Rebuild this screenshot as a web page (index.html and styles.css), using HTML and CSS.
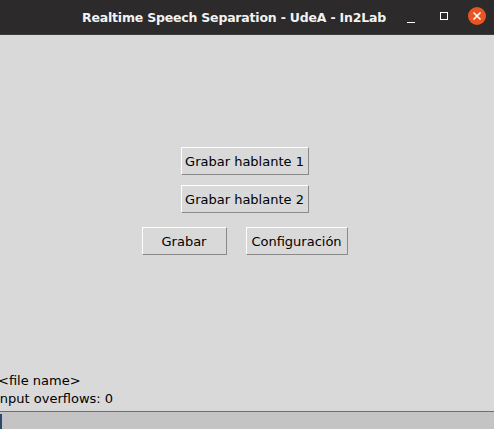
FILE: index.html
```html
<!DOCTYPE html>
<html>
<head>
<meta charset="utf-8">
<link rel="stylesheet" href="styles.css">
</head>
<body>
<div class="window">
  <header class="titlebar">
    <span class="title">Realtime Speech Separation - UdeA - In2Lab</span>
    <div class="controls">
      <span class="ctl min"><svg width="10" height="10" viewBox="0 0 10 10"><path d="M1 9.5H9" stroke="#ffffff" stroke-width="1"/></svg></span>
      <span class="ctl max"><svg width="10" height="10" viewBox="0 0 10 10"><rect x="1.5" y="1.5" width="7" height="7" fill="none" stroke="#ffffff" stroke-width="1"/></svg></span>
      <span class="ctl close"><svg width="18" height="18" viewBox="0 0 18 18"><circle cx="9" cy="9" r="9" fill="#e95420"/><path d="M5.5 5.5L12.5 12.5M12.5 5.5L5.5 12.5" stroke="#ffffff" stroke-width="1.6"/></svg></span>
    </div>
  </header>
  <main class="content">
    <div class="buttons">
      <button class="btn wide">Grabar hablante 1</button>
      <button class="btn wide">Grabar hablante 2</button>
      <div class="row">
        <button class="btn grabar">Grabar</button>
        <button class="btn config">Configuración</button>
      </div>
    </div>
    <div class="labels">
      <div class="label first">&lt;file name&gt;</div>
      <div class="label second">Input overflows: 0</div>
    </div>
    <div class="entry"><span class="cursor"></span></div>
  </main>
</div>
</body>
</html>
```
FILE: styles.css
```css
html, body {
  margin: 0;
  padding: 0;
  background: #d9d9d9;
  overflow: hidden;
}
.window {
  width: 494px;
  height: 429px;
  display: flex;
  flex-direction: column;
  font-family: "DejaVu Sans", sans-serif;
}
.titlebar {
  height: 34px;
  flex: none;
  background: #2c2a2b;
  border-bottom: 1px solid #3d3b3c;
  display: flex;
  align-items: center;
}
.title {
  color: #f2f2f2;
  font-family: "DejaVu Sans", sans-serif;
  font-weight: bold;
  font-size: 12.5px;
  margin-left: 82px;
  letter-spacing: -0.2px;
  white-space: nowrap;
}
.controls {
  display: flex;
  align-items: center;
  margin-left: auto;
  margin-right: 8px;
}
.ctl {
  display: flex;
  align-items: center;
  justify-content: center;
}
.min { width: 10px; height: 10px; margin-right: 23px; margin-top: 1px; }
.max { width: 10px; height: 10px; margin-right: 19px; margin-top: -2px; }
.close { width: 18px; height: 18px; margin-top: -2px; }
.content {
  flex: 1;
  display: flex;
  flex-direction: column;
  min-height: 0;
}
.buttons {
  display: flex;
  flex-direction: column;
  align-items: center;
  padding-top: 112px;
  padding-right: 5px;
  gap: 10px;
}
.row {
  display: flex;
  gap: 19px;
  margin-top: 4px;
}
.btn {
  font-family: "DejaVu Sans", sans-serif;
  font-size: 13px;
  color: #000000;
  background: #d9d9d9;
  border: 1px solid;
  border-color: #ffffff #8a8a8a #8a8a8a #ffffff;
  height: 28px;
  padding: 0;
  margin: 0;
  border-radius: 0;
}
.wide { width: 128px; }
.grabar { width: 85px; }
.config { width: 102px; }
.labels {
  margin-top: auto;
  display: flex;
  flex-direction: column;
  padding-bottom: 3px;
}
.label {
  font-size: 13px;
  line-height: 18px;
  color: #000000;
  white-space: nowrap;
}
.first { margin-left: -2px; }
.second { margin-left: -4px; }
.entry {
  height: 17px;
  flex: none;
  border-top: 1px solid #6e6e6e;
  background: #c4c4c4;
  display: flex;
  align-items: center;
}
.cursor {
  width: 2px;
  height: 15px;
  margin-top: 2px;
  background: #2b4a6e;
}
```
